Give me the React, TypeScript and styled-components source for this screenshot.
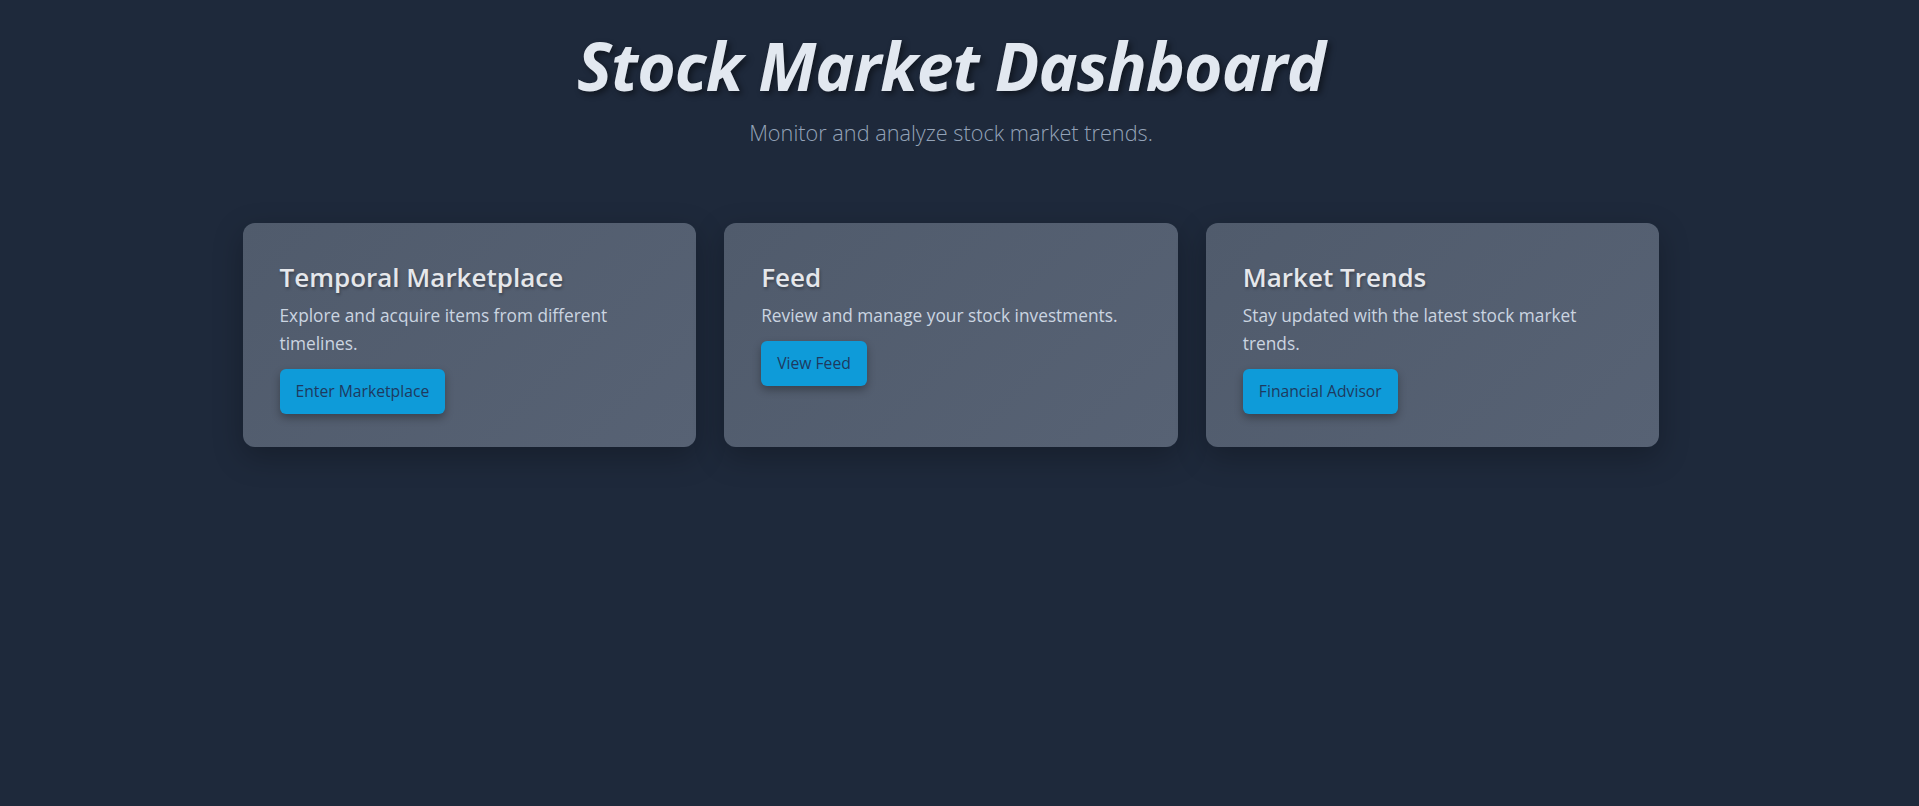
import React from "react";
import styled, { createGlobalStyle } from "styled-components";

const GlobalStyle = createGlobalStyle`
  html, body {
    margin: 0;
    padding: 0;
    background: #1e293b;
  }
  body {
    font-family: "Open Sans", "Noto Sans", Arial, sans-serif;
    color: #e2e8f0;
  }
  * { box-sizing: border-box; }
`;

const Page = styled.div`
  min-height: 100vh;
  padding: 29px 33px 32px 16px;
  box-sizing: content-box;
  display: flex;
  flex-direction: column;
  align-items: center;
`;

const Header = styled.header`
  display: flex;
  flex-direction: column;
  align-items: center;
  margin-bottom: 76px;
`;

const Title = styled.h1`
  margin: 0;
  font-size: 66px;
  font-weight: 700;
  font-style: italic;
  letter-spacing: -1px;
  line-height: 1.1;
  color: #e2e8f0;
  text-shadow: 3px 3px 6px rgba(0, 0, 0, 0.45);
`;

const Subtitle = styled.p`
  margin: 16px 0 0;
  font-size: 21.7px;
  font-weight: 300;
  color: #94a3b8;
`;

const Grid = styled.section`
  width: 100%;
  max-width: 1417px;
  display: grid;
  grid-template-columns: repeat(3, 1fr);
  gap: 28px;
  align-items: stretch;
`;

const Card = styled.article`
  background: linear-gradient(135deg, #505b6c 0%, #576274 100%);
  border-radius: 12px;
  padding: 37px 37px 33px;
  box-shadow: 0 10px 30px rgba(0, 0, 0, 0.25);
  display: flex;
  flex-direction: column;
  align-items: flex-start;
`;

const CardTitle = styled.h2`
  margin: 0 0 7px;
  font-size: 26px;
  font-weight: 600;
  line-height: 1.35;
  color: #e5e7eb;
  text-shadow: 1px 2px 3px rgba(0, 0, 0, 0.3);
`;

const CardText = styled.p`
  margin: 0 0 11px;
  font-size: 17.3px;
  line-height: 28px;
  color: #cbd5e1;
`;

const ActionButton = styled.button`
  font-family: inherit;
  font-size: 15.7px;
  color: #1e3a5f;
  background: #0e9bd9;
  border: none;
  border-radius: 6px;
  padding: 11px 16px 12px;
  line-height: 22px;
  box-shadow: 0 4px 8px rgba(0, 0, 0, 0.3);
  cursor: pointer;
`;

const cards = [
  {
    title: "Temporal Marketplace",
    text: "Explore and acquire items from different timelines.",
    action: "Enter Marketplace",
  },
  {
    title: "Feed",
    text: "Review and manage your stock investments.",
    action: "View Feed",
  },
  {
    title: "Market Trends",
    text: "Stay updated with the latest stock market trends.",
    action: "Financial Advisor",
  },
];

export default function App() {
  return (
    <>
      <GlobalStyle />
      <Page>
        <Header>
          <Title>Stock Market Dashboard</Title>
          <Subtitle>Monitor and analyze stock market trends.</Subtitle>
        </Header>
        <Grid>
          {cards.map((c) => (
            <Card key={c.title}>
              <CardTitle>{c.title}</CardTitle>
              <CardText>{c.text}</CardText>
              <ActionButton>{c.action}</ActionButton>
            </Card>
          ))}
        </Grid>
      </Page>
    </>
  );
}
